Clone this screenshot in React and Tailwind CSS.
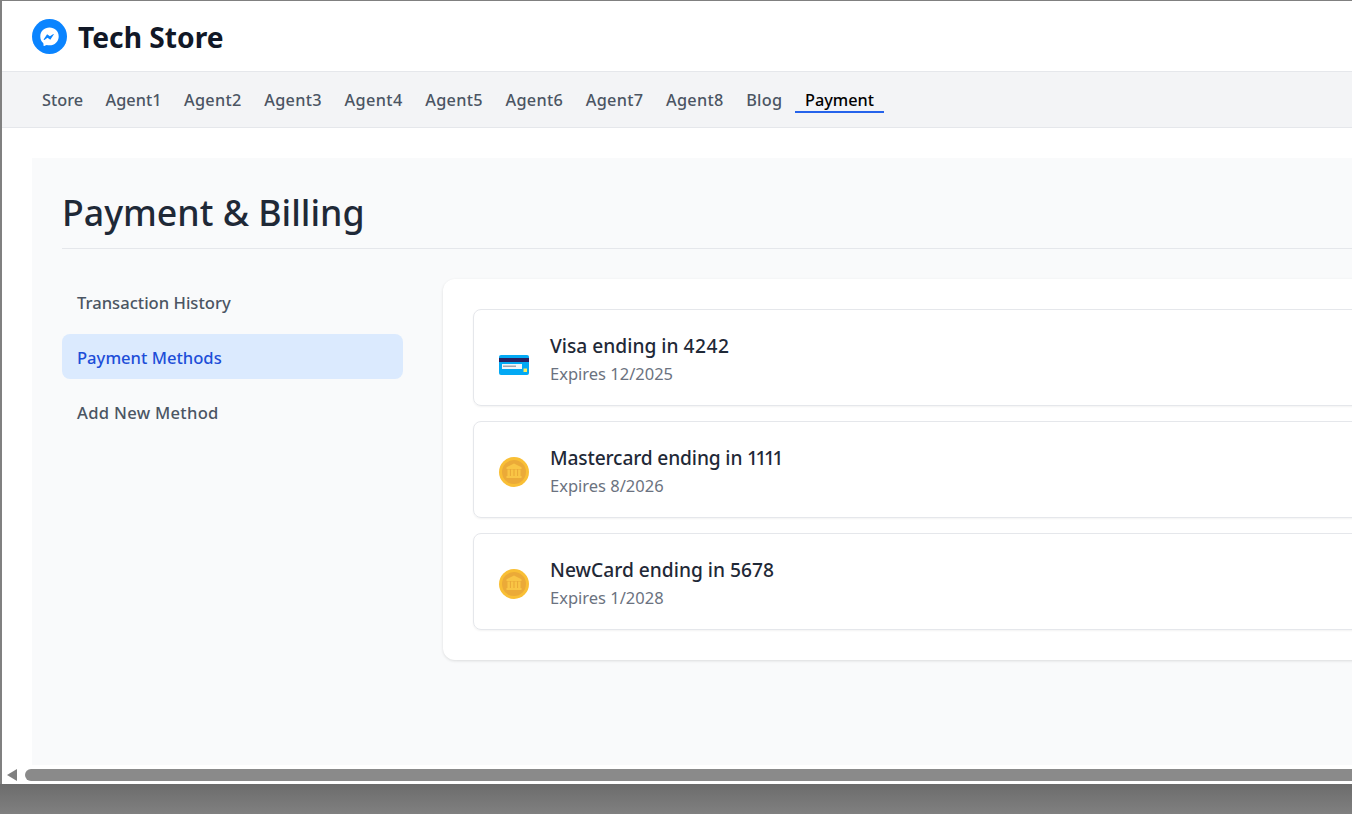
const navItems = [
  { label: "Store", cls: "" },
  { label: "Agent1", cls: "" },
  { label: "Agent2", cls: "tracking-[0.3px]" },
  { label: "Agent3", cls: "tracking-[0.3px]" },
  { label: "Agent4", cls: "tracking-[0.4px]" },
  { label: "Agent5", cls: "tracking-[0.3px]" },
  { label: "Agent6", cls: "tracking-[0.3px]" },
  { label: "Agent7", cls: "tracking-[0.3px]" },
  { label: "Agent8", cls: "tracking-[0.3px]" },
  { label: "Blog", cls: "tracking-[0.3px]" },
]

const cards = [
  { title: "Visa ending in ", titleCls: "", digits: "4242", digitCls: "tracking-[0.5px]", sub: "Expires 12/2025", icon: "card" },
  { title: "Mastercard ending in ", titleCls: "tracking-[-0.15px]", digits: "1111", digitCls: "tracking-[-2.5px]", sub: "Expires 8/2026", icon: "bank" },
  { title: "NewCard ending in ", titleCls: "", digits: "5678", digitCls: "", sub: "Expires 1/2028", icon: "bank" },
]

const MessengerLogo = () => (
  <svg width="35" height="35" viewBox="0 0 35 35">
    <circle cx="17.5" cy="17.5" r="17.5" fill="#0a84ff" />
    <path
      d="M17.5 8.5c-5.2 0-9.2 3.8-9.2 8.9 0 2.7 1.1 5 2.9 6.6.3.3.3 2.8.5 3 .3.2 2.6-1.2 3-1.1.9.2 1.8.4 2.8.4 5.2 0 9.2-3.8 9.2-8.9s-4-8.9-9.2-8.9z"
      fill="#fff"
    />
    <path d="M11.8 20.3l3.3-5.1 2.8 2.1 3.1-2.1c.4-.3.9.2.6.6l-3.3 5-2.8-2.1-3.1 2.2c-.4.3-.9-.2-.6-.6z" fill="#0a84ff" />
  </svg>
)

const CardIcon = () => (
  <svg width="30" height="20" viewBox="0 0 30 20">
    <rect width="30" height="20" rx="2" fill="#03a9f4" />
    <rect y="3" width="30" height="4" fill="#2a1f5f" />
    <rect x="3" y="9" width="20" height="5" fill="#f1f5f9" />
    <rect x="4" y="10.5" width="13" height="1.5" fill="#9ca3af" />
    <rect x="24.5" y="13.5" width="3.5" height="3.5" fill="#ffee58" />
  </svg>
)

const BankIcon = () => (
  <svg width="30" height="30" viewBox="0 0 30 30">
    <circle cx="15" cy="15" r="15" fill="#f9bf35" />
    <circle cx="15" cy="15" r="12" fill="#ebaa38" />
    <path d="M15 6.5l7.5 3.8V12h-15v-1.7z" fill="#f9c545" />
    <rect x="8.5" y="12.5" width="2.4" height="6.5" fill="#f9c545" />
    <rect x="12" y="12.5" width="2.4" height="6.5" fill="#f9c545" />
    <rect x="15.6" y="12.5" width="2.4" height="6.5" fill="#f9c545" />
    <rect x="19.1" y="12.5" width="2.4" height="6.5" fill="#f9c545" />
    <rect x="7.5" y="19" width="15" height="2" fill="#f9c545" />
  </svg>
)

export default function App() {
  return (
    <div className="flex h-[814px] w-[1352px] flex-col overflow-hidden bg-[#808080] font-['Noto_Sans',sans-serif]">
      <div className="ml-[2px] mt-px flex h-[783px] shrink-0 flex-col overflow-hidden bg-white">
        {/* Header */}
        <header className="flex h-[71px] shrink-0 items-center gap-[11px] border-b border-[#e5e7eb] pl-[30px]">
          <MessengerLogo />
          <span className="mt-[2px] text-[28.2px] font-bold text-[#111827]">Tech Store</span>
        </header>

        {/* Nav */}
        <nav className="flex h-[56px] shrink-0 items-start gap-[2.55px] border-b border-[#e5e7eb] bg-[#f3f4f6] pl-[30px] pt-[16px]">
          {navItems.map((item) => (
            <a key={item.label} className={`h-[25px] px-[10px] text-[16.3px] font-medium leading-[24px] text-[#4b5563] ${item.cls}`}>
              {item.label}
            </a>
          ))}
          <a className="h-[25px] border-b-2 border-[#2563eb] px-[10px] text-[16.3px] font-medium leading-[24px] text-black">Payment</a>
        </nav>

        {/* Main */}
        <main className="min-h-0 flex-1 overflow-hidden pl-[30px] pt-[30px]">
          <div className="h-[640px] w-[1500px] bg-[#f9fafb] p-[30px]">
            <h1 className="h-[61px] border-b border-[#e5e7eb] text-[35.7px] font-medium leading-[48px] text-[#1f2937]">
              Payment &amp; Billing
            </h1>
            <div className="mt-[30px] flex gap-[40px]">
              <aside className="flex w-[341px] shrink-0 flex-col gap-[10px]">
                <a className="rounded-lg px-[15px] pb-[9px] pt-[11px] text-[16.6px] font-medium leading-[25px] text-[#4b5563]">Transaction History</a>
                <a className="rounded-lg bg-[#dbeafe] px-[15px] pb-[9px] pt-[11px] text-[16.6px] font-medium leading-[25px] text-[#1d4ed8]">Payment Methods</a>
                <a className="rounded-lg px-[15px] pb-[9px] pt-[11px] text-[16.6px] font-medium leading-[25px] tracking-[0.3px] text-[#4b5563]">Add New Method</a>
              </aside>
              <section className="flex flex-1 flex-col gap-[15px] rounded-xl bg-white p-[30px] shadow-[0_1px_3px_rgba(0,0,0,0.12)]">
                {cards.map((card) => (
                  <div key={card.title} className="flex h-[97px] items-center gap-[21px] rounded-lg border border-[#e5e7eb] pl-[25px] shadow-[0_1px_2px_rgba(0,0,0,0.05)]">
                    {card.icon === "card" ? (
                      <div className="mt-[15px] w-[30px]"><CardIcon /></div>
                    ) : (
                      <div className="mt-[5px] w-[30px]"><BankIcon /></div>
                    )}
                    <div className="pt-[4px]">
                      <div className={`text-[19.2px] font-medium leading-[28px] text-[#1f2937] ${card.titleCls}`}>
                        {card.title}
                        <span className={card.digitCls}>{card.digits}</span>
                      </div>
                      <div className="text-[16.5px] leading-[28px] text-[#6b7280]">{card.sub}</div>
                    </div>
                  </div>
                ))}
              </section>
            </div>
          </div>
        </main>

        {/* Horizontal scrollbar */}
        <div className="flex h-[19px] shrink-0 items-start bg-white pl-[5px] pt-[4px]">
          <svg width="10" height="12" viewBox="0 0 10 12" className="shrink-0">
            <path d="M10 0v12L0 6z" fill="#808080" />
          </svg>
          <div className="ml-[8px] h-[12px] flex-1 rounded-l-md bg-[#8a8a8a]" />
        </div>
      </div>
      {/* Shadow strip under the window */}
      <div className="flex-1 bg-gradient-to-b from-[#6c6c6c] to-[#808080]" />
    </div>
  )
}
